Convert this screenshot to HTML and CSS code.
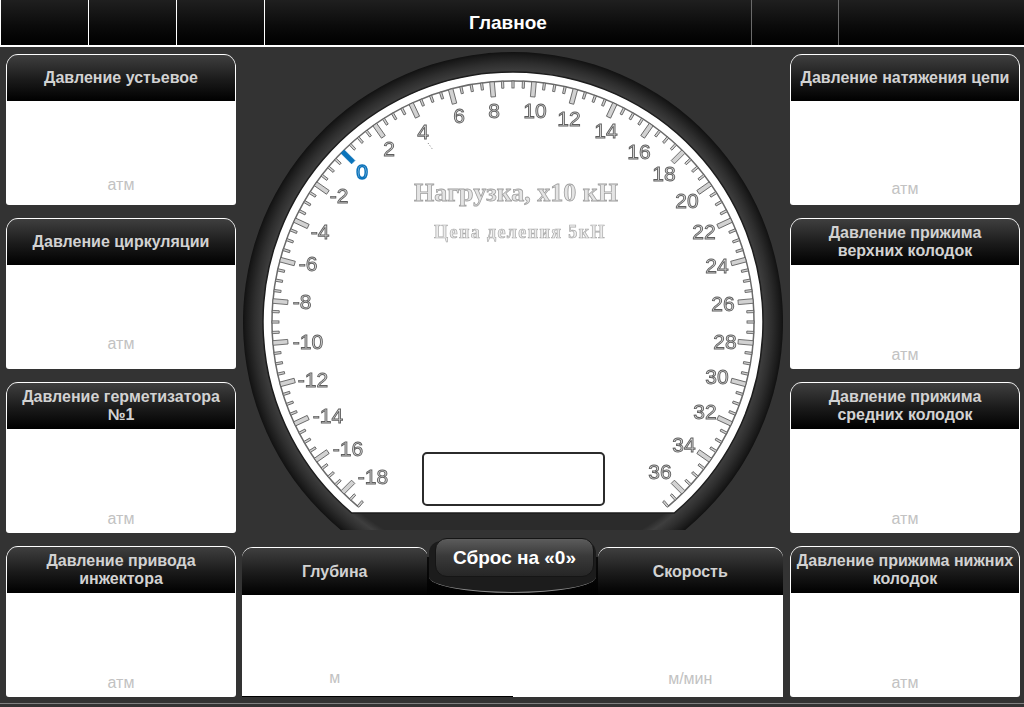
FILE: index.html
```html
<!DOCTYPE html>
<html lang="ru">
<head>
<meta charset="utf-8">
<title>Главное</title>
<link rel="stylesheet" href="styles.css">
</head>
<body>
<div class="screen">
  <header class="topbar">
    <div class="cell"></div>
    <div class="cell"></div>
    <div class="cell"></div>
    <div class="cell title">Главное</div>
    <div class="cell dim"></div>
    <div class="cell dim"></div>
  </header>

  <main class="main">
    <section class="column">
      <div class="panel">
        <div class="panel-head">Давление устьевое</div>
        <div class="panel-body raise-6"><span class="unit">атм</span></div>
      </div>
      <div class="panel">
        <div class="panel-head">Давление циркуляции</div>
        <div class="panel-body raise-11"><span class="unit">атм</span></div>
      </div>
      <div class="panel">
        <div class="panel-head">Давление герметизатора №1</div>
        <div class="panel-body"><span class="unit">атм</span></div>
      </div>
      <div class="panel">
        <div class="panel-head">Давление привода инжектора</div>
        <div class="panel-body"><span class="unit">атм</span></div>
      </div>
    </section>

    <section class="center">
      <svg class="gauge" width="554" height="490" viewBox="0 0 554 490">
        <defs>
          <radialGradient id="bezel" gradientUnits="userSpaceOnUse" cx="277" cy="275" r="271">
            <stop offset="0" stop-color="#2b2b2b"/>
            <stop offset="0.9" stop-color="#2b2b2b"/>
            <stop offset="0.925" stop-color="#3e3e3e"/>
            <stop offset="0.955" stop-color="#2e2e2e"/>
            <stop offset="0.985" stop-color="#1a1a1a"/>
            <stop offset="1" stop-color="#0e0e0e"/>
          </radialGradient>
        </defs>
        <path class="bezel" d="M 104.8 483 A 270 270 0 1 1 449.2 483 Z"/>
        <path class="dial" d="M 115.7 466 A 250 250 0 1 1 438.3 466 Z"/>
        <g transform="translate(277 275)">
          <path class="scale-arc" d="M -154.9 184.6 A 241 241 0 1 1 154.9 184.6"/>
          <g id="scale"></g>
        </g>
        <g transform="translate(-236 -47)">
          <line class="needle" x1="428" y1="143" x2="433" y2="150"/>
          <text class="num" x="373" y="484">-18</text>
          <text class="num" x="348" y="456">-16</text>
          <text class="num" x="328" y="423">-14</text>
          <text class="num" x="313" y="387">-12</text>
          <text class="num" x="308" y="349">-10</text>
          <text class="num" x="302" y="309">-8</text>
          <text class="num" x="308" y="271">-6</text>
          <text class="num" x="320" y="239">-4</text>
          <text class="num" x="339" y="203">-2</text>
          <text class="num zero" x="362" y="179">0</text>
          <text class="num" x="389" y="156">2</text>
          <text class="num" x="423" y="139">4</text>
          <text class="num" x="459" y="123">6</text>
          <text class="num" x="494" y="118">8</text>
          <text class="num" x="535" y="118">10</text>
          <text class="num" x="569" y="126">12</text>
          <text class="num" x="606" y="138">14</text>
          <text class="num" x="639" y="159">16</text>
          <text class="num" x="664" y="181">18</text>
          <text class="num" x="687" y="208">20</text>
          <text class="num" x="704" y="239">22</text>
          <text class="num" x="717" y="273">24</text>
          <text class="num" x="723" y="311">26</text>
          <text class="num" x="725" y="349">28</text>
          <text class="num" x="717" y="384">30</text>
          <text class="num" x="705" y="419">32</text>
          <text class="num" x="684" y="452">34</text>
          <text class="num" x="660" y="479">36</text>
          <text class="g-title" x="516" y="201">Нагрузка, x10 кН</text>
          <text class="g-sub" x="520" y="238">Цена деления 5кН</text>
          <rect class="display" x="423" y="453" width="181" height="52" rx="4"/>
        </g>
      </svg>

      <div class="bottom-row">
        <div class="bpanel left">
          <div class="panel-head">Глубина</div>
          <div class="panel-body"><span class="unit">м</span></div>
        </div>
        <div class="bpanel right">
          <div class="panel-head">Скорость</div>
          <div class="panel-body"><span class="unit">м/мин</span></div>
        </div>
        <div class="reset-plate">
          <button class="reset">Сброс на «0»</button>
        </div>
      </div>
    </section>

    <section class="column">
      <div class="panel">
        <div class="panel-head">Давление натяжения цепи</div>
        <div class="panel-body raise-2"><span class="unit">атм</span></div>
      </div>
      <div class="panel">
        <div class="panel-head">Давление прижима верхних колодок</div>
        <div class="panel-body"><span class="unit">атм</span></div>
      </div>
      <div class="panel">
        <div class="panel-head">Давление прижима средних колодок</div>
        <div class="panel-body"><span class="unit">атм</span></div>
      </div>
      <div class="panel">
        <div class="panel-head">Давление прижима нижних колодок</div>
        <div class="panel-body"><span class="unit">атм</span></div>
      </div>
    </section>
  </main>

  <div class="footer-line"></div>
</div>
<script src="script.js"></script>
</body>
</html>
```

FILE: styles.css
```css
* { box-sizing: border-box; }

body {
  margin: 0;
  background: #333;
  font-family: "Liberation Sans", Arial, sans-serif;
}

.screen {
  width: 1024px;
  height: 707px;
  display: flex;
  flex-direction: column;
  overflow: hidden;
}

/* ---------- top bar ---------- */
.topbar {
  flex: none;
  height: 47px;
  display: grid;
  grid-template-columns: 88px 88px 88px 487px 87px 1fr;
  border-bottom: 2px solid #fff;
}

.cell {
  background: linear-gradient(#1f1f1f, #0a0a0a 60%, #000);
  border-left: 1px solid #fff;
  display: flex;
  align-items: center;
  justify-content: center;
}

.cell.dim { border-left-color: #6a6a6a; }

.title {
  color: #fff;
  font-weight: bold;
  font-size: 19px;
}

/* ---------- main grid ---------- */
.main {
  flex: 1;
  display: grid;
  grid-template-columns: 230px 554px 230px;
  padding-left: 6px;
}

.column {
  display: flex;
  flex-direction: column;
  gap: 14px;
  padding-top: 8px;
}

.panel {
  flex: none;
  height: 150px;
  display: flex;
  flex-direction: column;
  background: #fff;
  border-radius: 12px 12px 3px 3px;
}

.panel-head {
  flex: none;
  height: 46px;
  margin: 0 1px;
  display: flex;
  align-items: center;
  justify-content: center;
  text-align: center;
  padding: 0 4px;
  color: #d2d2d2;
  font-weight: bold;
  font-size: 16px;
  line-height: 18px;
  background: linear-gradient(#3f3f3f, #1a1a1a 55%, #000);
  border-radius: 11px 11px 0 0;
  box-shadow: 0 -1px 0 #fff;
}

.panel-body {
  flex: 1;
  display: flex;
  align-items: flex-end;
  justify-content: center;
  padding-bottom: 5px;
}

.panel-body.raise-2 { padding-bottom: 7px; }
.panel-body.raise-6 { padding-bottom: 11px; }
.panel-body.raise-11 { padding-bottom: 16px; }

.unit {
  font-size: 16px;
  line-height: 18px;
  color: #c2c2c2;
}

/* ---------- centre ---------- */
.center {
  display: flex;
  flex-direction: column;
}

.gauge {
  display: block;
  will-change: transform;
}

.bezel { fill: url(#bezel); }

.dial {
  fill: #fff;
  stroke: #1c1c1c;
  stroke-width: 1.5;
}

.scale-arc {
  fill: none;
  stroke: #6a6a6a;
  stroke-width: 1.5;
}

.tick {
  fill: #d2d2d2;
  stroke: #5a5a5a;
  stroke-width: 0.8;
}

.tick.zero { fill: #0b74bb; stroke: #0b74bb; }

.needle {
  stroke: #777;
  stroke-width: 1;
  stroke-dasharray: 1 2;
}

.num {
  font-family: "Liberation Sans", Arial, sans-serif;
  font-size: 21px;
  text-anchor: middle;
  fill: #d8d8d8;
  stroke: #5e5e5e;
  stroke-width: 0.9;
}

.num.zero {
  fill: #fff;
  stroke: #0a72ba;
  stroke-width: 1.5;
}

.g-title, .g-sub {
  font-family: "Liberation Serif", "Times New Roman", serif;
  font-weight: bold;
  text-anchor: middle;
  fill: #e4e4e4;
  stroke: #a0a0a0;
  stroke-width: 0.8;
}

.g-title { font-size: 26px; }

.g-sub {
  font-size: 18px;
  letter-spacing: 1.4px;
  fill: #ececec;
  stroke: #ababab;
  stroke-width: 0.7;
}

.display {
  fill: #fff;
  stroke: #2b2b2b;
  stroke-width: 2;
}

/* ---------- bottom row ---------- */
.bottom-row {
  flex: none;
  position: relative;
  margin: 11px 7px 0 6px;
  height: 149px;
  display: grid;
  grid-template-columns: 1fr 1fr;
}

.bpanel {
  display: flex;
  flex-direction: column;
}

.bpanel .panel-head {
  height: 47px;
  margin: 0;
}

.bpanel.left .panel-head { margin-right: 85px; }
.bpanel.right .panel-head { margin-left: 85px; }

.bpanel .panel-body {
  background: #fff;
  padding-bottom: 9px;
}

.bpanel.left .panel-body {
  padding-right: 85px;
  border-bottom: 1px solid #000;
}

.bpanel.right .panel-body { padding-left: 85px; }

.reset-plate {
  position: absolute;
  left: 185px;
  top: -15px;
  width: 171px;
  height: 60px;
  background: #333;
}

.reset-plate::before {
  content: "";
  position: absolute;
  left: 0;
  right: 0;
  top: 24px;
  bottom: -2px;
  background: linear-gradient(#0c0c0c, #000);
}

.reset-plate::after {
  content: "";
  position: absolute;
  left: 2px;
  right: 2px;
  top: 8px;
  height: 51px;
  background: #1c1c1c;
  border-bottom: 1px solid #8a8a8a;
  border-radius: 12px 12px 50% 50% / 12px 12px 16px 16px;
}

.reset {
  position: relative;
  z-index: 1;
  display: block;
  margin: 5px 0 0 8px;
  width: 159px;
  height: 39px;
  border: 1px solid #151515;
  border-radius: 12px;
  background: linear-gradient(#5c5c5c, #3a3a3a 45%, #262626);
  color: #fff;
  font-family: "Liberation Sans", Arial, sans-serif;
  font-weight: bold;
  font-size: 19px;
  padding: 0;
}

/* ---------- footer ---------- */
.footer-line {
  flex: none;
  height: 4px;
  border-top: 1px solid #808080;
}
```

FILE: script.js
```js
(function () {
  var NS = "http://www.w3.org/2000/svg";
  var scale = document.getElementById("scale");
  var R = 241;

  // ticks every 0.5 unit from -19 to 37; 5 degrees per unit, value 0 at -45 degrees
  for (var i = -38; i <= 74; i++) {
    var v = i / 2;
    var major = i % 4 === 0;
    var len = major ? 15 : 7;
    var w = major ? 4.6 : 2.2;
    var r = document.createElementNS(NS, "rect");
    r.setAttribute("x", (-w / 2).toFixed(2));
    r.setAttribute("y", -R);
    r.setAttribute("width", w);
    r.setAttribute("height", len);
    r.setAttribute("transform", "rotate(" + (-45 + v * 5) + ")");
    r.setAttribute("class", major ? (v === 0 ? "tick zero" : "tick major") : "tick");
    scale.appendChild(r);
  }
})();
```
